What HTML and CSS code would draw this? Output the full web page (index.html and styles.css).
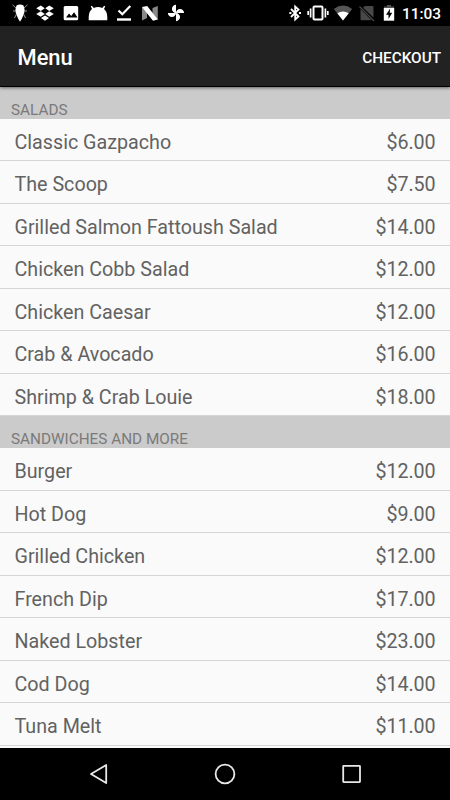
FILE: index.html
```html
<!DOCTYPE html>
<html lang="en">
<head>
    <meta charset="UTF-8">
    <meta name="viewport" content="width=device-width, initial-scale=1.0">
    <title>Menu</title>
    <link rel="stylesheet" href="styles.css">
</head>
<body>
    <div class="screen">
        <div class="status-bar">
            <div class="notifications">
                <svg width="18" height="20" viewBox="0 0 18 20">
                    <path d="M5.500 2.500Q9 .3 12.500 2.500L13.700 7Q13.300 12 9 18.800Q4.700 12 4.300 7Z" fill="#fff"/>
                    <path d="M5 5L1.500 1.800M13 5l3.500-3.200M5 8L2 8M13 8h3M5.500 11L3.500 15M12.500 11L14.500 15" fill="none" stroke="#999" stroke-width="1"/>
                </svg>
                <svg width="20" height="20" viewBox="0 0 20 20" fill="#fff">
                    <path d="M5.800 2.500L9.800 5.200 5.800 7.900 1.200 5.200ZM14.200 2.500L18.800 5.200 14.200 7.900 10.200 5.200ZM5.800 8.300L9.800 11 5.800 13.700 1.200 11ZM14.200 8.300L18.800 11 14.200 13.700 10.200 11ZM10 12.400L14 15 10 17.800 6 15Z"/>
                </svg>
                <svg width="20" height="20" viewBox="0 0 20 20">
                    <rect x="2.700" y="3" width="14.500" height="14.300" rx="1.500" fill="#fff"/>
                    <path d="M5 14.500l3-4 2.200 2.600 2.900-3.800 3.400 5.200z" fill="#000"/>
                </svg>
                <svg width="20" height="20" viewBox="0 0 20 20">
                    <path d="M.7 17.300V14Q.8 8.500 4 6L2.800 3.500 3.800 2.700 5.800 5Q10 3.200 14.200 5L16.200 2.700 17.200 3.500 16 6Q19.200 8.500 19.300 14V17.300Z" fill="#fff"/>
                </svg>
                <svg width="20" height="20" viewBox="0 0 20 20">
                    <path d="M4.500 7.500L8.300 11.300 16.300 3" fill="none" stroke="#fff" stroke-width="2.200"/>
                    <rect x="3" y="15.300" width="14" height="2.400" fill="#fff"/>
                </svg>
                <svg width="20" height="20" viewBox="0 0 20 20">
                    <path d="M2 4L7 8V15L2 17.500ZM12.500 5L17.800 3V17L12.500 12Z" fill="#888"/>
                    <path d="M2 4L7.200 3 17.800 16.500 13 17.800Z" fill="#fff"/>
                </svg>
                <svg width="20" height="20" viewBox="-1.500 -1.500 27 27">
                    <path d="M12 12c0-3 2.500-5.500 5.500-5.500S23 9 23 12H12zm0 0c0 3-2.500 5.500-5.500 5.500S1 15 1 12h11zm0 0c-3 0-5.500-2.500-5.500-5.500S9 1 12 1v11zm0 0c3 0 5.500 2.500 5.500 5.500S15 23 12 23V12z" fill="#fff"/>
                </svg>
            </div>
            <div class="system">
                <svg width="16" height="20" viewBox="0 0 16 20">
                    <path d="M4 6L11.500 13.500 8.200 16.500V3.500L11.500 6.500 4 14" fill="none" stroke="#fff" stroke-width="1.800"/>
                    <path d="M2.400 9h2v2h-2zM12 9h2v2h-2z" fill="#fff"/>
                </svg>
                <svg width="22" height="20" viewBox="0 0 22 20" fill="none" stroke="#fff">
                    <rect x="6.500" y="3.500" width="9" height="13" rx="1" stroke-width="2"/>
                    <path d="M3.600 5.500V14.500M18.400 5.500V14.500M1.200 8V12M20.800 8V12" stroke-width="1.700"/>
                </svg>
                <svg width="20" height="20" viewBox="0 0 20 20">
                    <path d="M.8 6Q10-.8 19.200 6L10 17.500Z" fill="#555"/>
                    <path d="M4.300 10.300Q10 6.500 15.700 10.300L10 17.500Z" fill="#fff"/>
                </svg>
                <svg width="20" height="20" viewBox="0 0 20 20">
                    <path d="M8 3H15.500Q16.500 3 16.500 4V14.500L6 4.800ZM3.500 6L14.500 17.300H4.500Q3.500 17.300 3.500 16.300Z" fill="#484848"/>
                    <path d="M2.500 3.500L17 18" stroke="#484848" stroke-width="1.300"/>
                </svg>
                <svg class="battery" width="12" height="20" viewBox="0 0 12 20">
                    <path d="M4 2h4v1.500h3V6H1V3.500h3z" fill="#555"/>
                    <path d="M.8 5h10.400v12.700H.8z" fill="#fff"/>
                    <path d="M7.200 5.500L3 11.700H5.500V16L9.200 9.700H6.700Z" fill="#000"/>
                </svg>
                <span class="clock">11:03</span>
            </div>
        </div>

        <div class="action-bar">
            <h1>Menu</h1>
            <button class="checkout-btn">CHECKOUT</button>
        </div>

        <div class="menu-list">
            <h2 class="section-title">SALADS</h2>
            <div class="menu-item"><span>Classic Gazpacho</span><span class="price">$6.00</span></div>
            <div class="menu-item"><span>The Scoop</span><span class="price">$7.50</span></div>
            <div class="menu-item"><span>Grilled Salmon Fattoush Salad</span><span class="price">$14.00</span></div>
            <div class="menu-item"><span>Chicken Cobb Salad</span><span class="price">$12.00</span></div>
            <div class="menu-item"><span>Chicken Caesar</span><span class="price">$12.00</span></div>
            <div class="menu-item"><span>Crab &amp; Avocado</span><span class="price">$16.00</span></div>
            <div class="menu-item"><span>Shrimp &amp; Crab Louie</span><span class="price">$18.00</span></div>
            <h2 class="section-title">SANDWICHES AND MORE</h2>
            <div class="menu-item"><span>Burger</span><span class="price">$12.00</span></div>
            <div class="menu-item"><span>Hot Dog</span><span class="price">$9.00</span></div>
            <div class="menu-item"><span>Grilled Chicken</span><span class="price">$12.00</span></div>
            <div class="menu-item"><span>French Dip</span><span class="price">$17.00</span></div>
            <div class="menu-item"><span>Naked Lobster</span><span class="price">$23.00</span></div>
            <div class="menu-item"><span>Cod Dog</span><span class="price">$14.00</span></div>
            <div class="menu-item"><span>Tuna Melt</span><span class="price">$11.00</span></div>
        </div>

        <div class="nav-bar">
            <svg width="24" height="24" viewBox="0 0 24 24">
                <path d="M20.200 3V21L5 12Z"/>
            </svg>
            <svg width="24" height="24" viewBox="0 0 24 24">
                <circle cx="12" cy="12" r="9.400"/>
            </svg>
            <svg width="24" height="24" viewBox="0 0 24 24">
                <rect x="3.200" y="3.900" width="16.800" height="16.200" rx=".5"/>
            </svg>
        </div>
    </div>
</body>
</html>
```

FILE: styles.css
```css
body {
    margin: 0;
    background: #000;
    font-family: Roboto, sans-serif;
}

.screen {
    width: 450px;
    height: 800px;
    display: flex;
    flex-direction: column;
    overflow: hidden;
    background: #fafafa;
}

.status-bar {
    height: 26px;
    flex-shrink: 0;
    box-sizing: border-box;
    padding: 0 9px 0 11px;
    display: flex;
    justify-content: space-between;
    align-items: center;
    background: #000;
}

.status-bar svg {
    display: block;
}

.notifications {
    display: flex;
    gap: 6.2px;
}

.system {
    display: flex;
    align-items: center;
    gap: 4px;
}

.battery {
    margin-left: 2px;
}

.clock {
    margin-left: 3px;
    padding-top: 2px;
    color: #fff;
    font-size: 15.4px;
    font-weight: 500;
    line-height: 20px;
}

.action-bar {
    height: 61px;
    flex-shrink: 0;
    box-sizing: border-box;
    padding: 3px 9px 0 17.5px;
    display: flex;
    justify-content: space-between;
    align-items: center;
    background: #222;
    border-bottom: 1px solid #000;
    box-shadow: 0 1px 3px rgba(0,0,0,0.5);
    z-index: 1;
}

.action-bar h1 {
    margin: 0;
    color: #fff;
    font-size: 21.9px;
    font-weight: 500;
}

.checkout-btn {
    padding: 0;
    border: none;
    background: none;
    color: #fff;
    font-family: inherit;
    font-size: 15.3px;
    font-weight: 500;
}

.menu-list {
    flex: 1;
    min-height: 0;
    overflow: hidden;
}

.section-title {
    height: 31.75px;
    margin: 0;
    box-sizing: border-box;
    padding: 14px 11px 0;
    background: #cbcbcb;
    color: #7a7a7a;
    font-size: 15.3px;
    font-weight: 400;
    line-height: 19px;
}

.menu-item {
    height: 42.5px;
    box-sizing: border-box;
    padding: 0 14.5px;
    display: flex;
    justify-content: space-between;
    line-height: 48px;
    border-bottom: 1px solid #d5d5d5;
    color: #626262;
    font-size: 19.7px;
}

.price {
    letter-spacing: -0.1px;
}

.nav-bar {
    height: 52px;
    flex-shrink: 0;
    box-sizing: border-box;
    padding: 0 86px;
    display: flex;
    justify-content: space-between;
    align-items: center;
    background: #000;
}

.nav-bar svg {
    fill: none;
    stroke: #e8e8e8;
    stroke-width: 1.8;
    stroke-linejoin: round;
}
```
